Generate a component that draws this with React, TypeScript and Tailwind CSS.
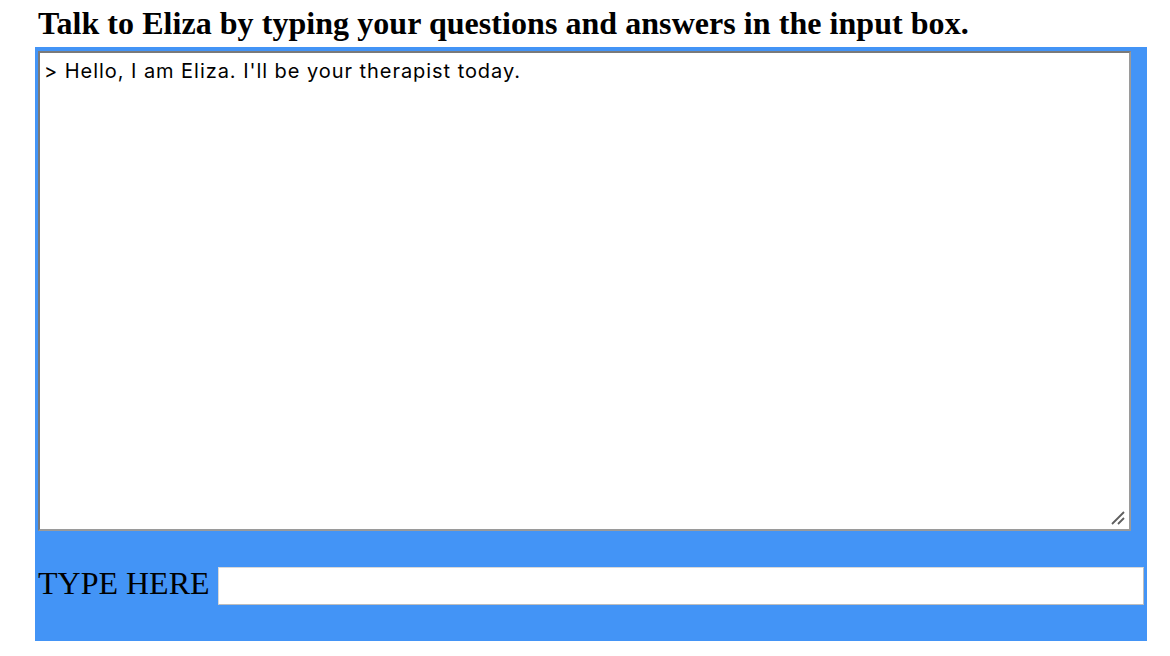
export default function App() {
  return (
    <div className="min-h-screen bg-white font-['Liberation_Serif',serif] text-black">
      <h1 className="pl-[38px] pt-[3px] h-[47px] text-[32px] leading-[40px] font-bold tracking-[0.05px]">
        Talk to Eliza by typing your questions and answers in the input box.
      </h1>
      <div className="ml-[35px] w-[1112px] h-[594px] bg-[#4394f6] flex flex-col pl-[3px] pt-[4px]">
        <div className="relative w-[1093px] h-[480px] bg-white border-2 border-t-[#7a7a7a] border-l-[#7a7a7a] border-r-[#9a9a9a] border-b-[#9a9a9a]">
          <div className="pl-[4px] pt-[6px] font-['Inter',sans-serif] text-[20px] leading-[24px] tracking-[0.95px]">
            &gt; Hello, I am Eliza. I'll be your therapist today.
          </div>
          <svg className="absolute right-[3px] bottom-[3px]" width="16" height="16" viewBox="0 0 16 16">
            <path d="M2 14 L14 2 M8 14 L14 8" stroke="#5f5f5f" strokeWidth="1.8" />
          </svg>
        </div>
        <div className="flex items-center mt-[36px] h-[38px]">
          <span className="text-[32px] leading-none mb-[6px]">TYPE HERE</span>
          <input className="ml-[8px] w-[926px] h-[38px] bg-white border border-t-[#d8d8d8] border-l-[#d8d8d8] border-r-[#bdbdbd] border-b-[#bdbdbd] outline-none" />
        </div>
      </div>
    </div>
  );
}
